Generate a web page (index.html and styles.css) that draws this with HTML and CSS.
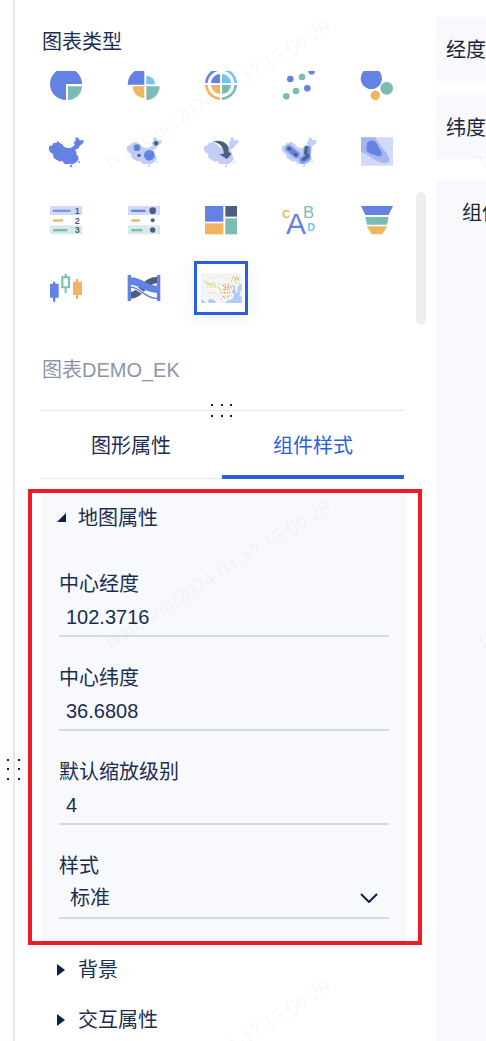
FILE: index.html
```html
<!DOCTYPE html>
<html lang="zh-CN">
<head>
  <meta charset="UTF-8" />
  <meta name="viewport" content="width=device-width, initial-scale=1.0" />
  <title>组件样式</title>
  <link rel="stylesheet" href="styles.css">
</head>
<body>
  <svg class="defs" aria-hidden="true">
    <symbol id="china" viewBox="0 0 96 96" overflow="visible">
      <path d="M-3 31L3 29L8 26L11 20L19 21L24 14L28 20L36 25L43 33L55 37L66 34L75 27L71 22L73 18L78 12L75 6L83 4L89 13L102 13L98 23L89 29L86 36L79 40L74 44L81 47L78 53L84 61L86 70L79 79L69 84L64 86L60 83L52 85L43 83L36 74L29 77L21 72L11 66L9 54L1 49L-3 42Z"/>
      <ellipse cx="63" cy="91" rx="4" ry="3"/>
      <ellipse cx="87" cy="78" rx="2" ry="4"/>
    </symbol>
  </svg>

  <div class="gutter">
    <svg class="gutterGrip" viewBox="0 0 14 22" aria-hidden="true"><path d="M0 0h2v2h-2zM11 0h2v2h-2zM0 9h2v2h-2zM11 9h2v2h-2zM0 19h2v2h-2zM11 19h2v2h-2z"/></svg>
  </div>

  <main class="panel">
    <h2 class="panelTitle">图表类型</h2>
    <div class="chartPicker">
      <div class="chartViewport">
        <div class="chartGrid">
          <button class="chart" aria-label="饼图"><svg viewBox="0 0 96 96"><path class="blue" d="M48 48H96A48 48 0 1 0 48 96Z"/><path class="teal" d="M54 55H96A42 42 0 0 1 54 96Z"/></svg></button>
          <button class="chart" aria-label="玫瑰图"><svg viewBox="0 0 96 96"><path class="blue" d="M-1 50A50 50 0 0 1 49 0V50Z"/><path class="sky" d="M55 49V23A27 26 0 0 1 81 49Z"/><path class="orange" d="M14 55H49V90A35 35 0 0 1 14 55Z"/><path class="teal" d="M55 55H95A40 41 0 0 1 55 96Z"/></svg></button>
          <button class="chart" aria-label="旭日图">
            <svg viewBox="0 0 96 96" fill="none" stroke-width="8">
              <path stroke="#6382e3" d="M4 45A44 44 0 0 1 45 4"/><path stroke="#72c4f0" d="M51 4A44 44 0 0 1 92 45"/>
              <path stroke="#7bbdb5" d="M92 51A44 44 0 0 1 51 92"/><path stroke="#efb55f" d="M45 92A44 44 0 0 1 4 51"/>
              <path class="blue" d="M45 45H18A28 28 0 0 1 45 18Z"/><path class="sky" d="M51 45V18A28 28 0 0 1 78 45Z"/>
              <path class="teal" d="M51 51H78A28 28 0 0 1 51 78Z"/><path class="orange" d="M45 51V78A28 28 0 0 1 18 51Z"/>
            </svg>
          </button>
          <button class="chart" aria-label="散点图"><svg viewBox="0 0 96 96"><g class="blue"><circle cx="22" cy="33" r="10"/><circle cx="86" cy="10" r="10"/><circle cx="73" cy="61" r="10"/></g><g class="teal"><circle cx="57" cy="27" r="10"/><circle cx="10" cy="85" r="10"/><circle cx="39" cy="69" r="10"/></g></svg></button>
          <button class="chart" aria-label="气泡图"><svg viewBox="0 0 96 96"><circle class="blue" cx="31" cy="31" r="32"/><circle class="teal" cx="77" cy="61" r="19"/><circle class="orange" cx="43" cy="82" r="14"/></svg></button>

          <button class="chart" aria-label="地图"><svg viewBox="0 0 96 96"><use href="#china" class="blue"/></svg></button>
          <button class="chart" aria-label="气泡地图"><svg viewBox="0 0 96 96"><use href="#china" class="pale"/><circle class="blue" cx="27" cy="35" r="10"/><circle class="slate" cx="84" cy="22" r="7"/><circle class="slate" cx="33" cy="58" r="5"/><circle class="blue" cx="64" cy="58" r="16"/></svg></button>
          <button class="chart" aria-label="迁徙地图"><svg viewBox="0 0 96 96"><use href="#china" class="pale"/><path class="slate" d="M24 17C48 8 74 20 71 48L80 53L66 69L43 55L56 53C58 36 46 20 24 17Z"/></svg></button>
          <button class="chart" aria-label="热力地图">
            <svg viewBox="0 0 96 96">
              <use href="#china" class="pale"/>
              <g fill="none" stroke-linecap="round">
                <g stroke="#91a8ec" stroke-width="24"><path d="M18 38L40 56"/><path d="M73 40L71 65L60 72"/></g>
                <g stroke="#6382e3" stroke-width="15"><path d="M18 38L40 56"/><path d="M72 38L72 64L60 71"/></g>
                <g stroke="#4d5f80" stroke-width="8"><path d="M16 38h5M36 55l4 2M70 34L67 50L75 60L62 69"/></g>
              </g>
            </svg>
          </button>
          <button class="chart" aria-label="等高线图"><svg viewBox="0 0 96 96"><path fill="#d0d9f7" d="M0 4h96v85H0z"/><path fill="#a4b6ef" d="M0 4H43C50 22 70 40 80 57C90 78 82 83 65 80C40 78 22 53 0 48Z"/><path class="blue" d="M17 30C17 15 30 10 43 18C49 22 51 34 60 45C66 56 58 64 48 60C40 54 19 55 16 40Z"/></svg></button>

          <button class="chart" aria-label="排行榜">
            <svg viewBox="0 0 96 96">
              <path fill="#d0d9f7" d="M0 6h96v27H0z"/><path fill="#d6ebe8" d="M0 64h96v27H0z"/>
              <path fill="#7b96ea" d="M9 17h53v7H9z"/><path class="orange" d="M9 46h30v7H9z"/><path class="teal" d="M9 75h43v7H9z"/>
              <g class="slate rank"><text x="74" y="30">1</text><text x="74" y="59">2</text><text x="74" y="87">3</text></g>
            </svg>
          </button>
          <button class="chart" aria-label="表格"><svg viewBox="0 0 96 96"><path fill="#d0d9f7" d="M0 6h96v27H0z"/><path fill="#d6ebe8" d="M0 64h96v27H0z"/><path class="blue" d="M10 17h42v7H10z"/><path class="orange" d="M10 46h26v7H10z"/><path class="teal" d="M10 75h33v7H10z"/><g class="slate"><circle cx="74" cy="20" r="10"/><circle cx="74" cy="49" r="6"/><circle cx="74" cy="78" r="8"/></g></svg></button>
          <button class="chart" aria-label="矩形树图"><svg viewBox="0 0 96 96"><path class="blue" d="M0 6h55v47H0z"/><path class="orange" d="M0 58h55v33H0z"/><path class="slate" d="M61 6h35v32H61z"/><path class="teal" d="M61 43h35v48H61z"/></svg></button>
          <button class="chart" aria-label="词云"><svg viewBox="0 0 96 96"><text class="orange" x="-2" y="42" font-size="33" font-weight="bold">C</text><text class="blue" x="9" y="91" font-size="90">A</text><text class="teal" x="60" y="43" font-size="50">B</text><text class="sky" x="73" y="81" font-size="32" font-weight="bold">D</text></svg></button>
          <button class="chart" aria-label="漏斗图"><svg viewBox="0 0 96 96"><path class="blue" d="M0 6H96L83 33H13Z"/><path class="teal" d="M13 39H83L78 62H18Z"/><path class="orange" d="M17 67H79L64 91H32Z"/></svg></button>

          <button class="chart" aria-label="K线图"><svg viewBox="0 0 96 96"><path class="blue" d="M0 35h9v-6h7v6h10v42H16v12H9V77H0z"/><path fill="none" stroke="#7bbdb5" stroke-width="6" d="M37 16h20v30H37zM47 5v11M47 46v17"/><path class="orange" d="M69 29h9v-8h6v8h12v40H84v12h-6V69h-9z"/></svg></button>
          <button class="chart" aria-label="桑基图">
            <svg viewBox="0 0 96 96" fill="none">
              <path stroke="#4d5f80" stroke-width="20" d="M8 70C42 68 48 25 88 24"/>
              <path stroke="#fff" stroke-width="9" d="M8 45C42 48 50 80 88 79"/>
              <path stroke="#6382e3" stroke-width="4" d="M8 45C42 48 50 80 88 79"/>
              <path stroke="#6382e3" stroke-width="22" d="M8 27C42 28 48 51 88 52"/>
              <path class="blue" d="M-1 9h10v78H-1zM87 9h10v78H87z"/>
            </svg>
          </button>
          <button class="chart chart--active" aria-label="自定义地图" aria-pressed="true">
            <svg class="thumb" viewBox="0 0 122 90">
              <path fill="#f5f5f3" d="M0 0h122v90H0z"/>
              <path fill="#adcdfb" d="M122 32L112 39L105 51L101 38L92 34L97 48L91 57L99 64L94 77L78 83L72 90H122ZM0 78L8 85L15 90H0ZM26 77L40 82L45 90H24L20 84Z"/>
              <path fill="#f8f5ee" d="M101 41l7 0 2 15-5 3zM118 53l4-5v20l-7 3z"/>
              <path fill="none" stroke="#dfdfe3" d="M0 20L18 24L35 14L56 12L80 18L101 12L122 18M10 50L24 56L48 67L70 64L88 52M45 0L58 10L78 4"/>
              <g fill="none" stroke-width="4">
                <path stroke="#c3dc62" stroke-dasharray="4 6" d="M9 25L28 34L45 28M18 38L34 43L54 42M24 60L45 58M56 53L80 49M94 12L115 10M89 24L118 21M102 29L120 34"/>
                <path stroke="#f5c04a" stroke-dasharray="4 5" d="M53 33L85 34M53 47L92 46M56 65L92 62M92 17L112 14M61 78L87 72M14 30L45 38"/>
                <path stroke="#dd8568" stroke-dasharray="4 4" d="M65 37L91 40M67 50L91 52M60 59L93 58M65 71L91 68M70 43L90 44M102 20L113 17"/>
              </g>
              <path fill="none" stroke="#fff" stroke-width="2" d="M64 30V83M76 28V82M87 35V78M54 55H92M53 65H93"/>
            </svg>
          </button>
        </div>
      </div>
      <div class="scrollThumb"></div>
    </div>

    <input class="chartName" type="text" aria-label="图表名称" value="图表DEMO_EK" />

    <div class="divider">
      <svg class="dividerGrip" viewBox="0 0 22 14" aria-hidden="true"><path d="M0 0h2v2h-2zM10 0h2v2h-2zM19 0h2v2h-2zM0 11h2v2h-2zM10 11h2v2h-2zM19 11h2v2h-2z"/></svg>
    </div>
    <nav class="tabs">
      <button class="tab">图形属性</button>
      <button class="tab tab--active">组件样式</button>
    </nav>

    <div class="highlight">
      <section class="group">
        <button class="groupTitle" aria-expanded="true"><svg class="caret" viewBox="0 0 9 12"><path d="M9 1V10H0Z"/></svg>地图属性</button>
        <div class="field">
          <label for="centerLng">中心经度</label>
          <input type="text" id="centerLng" value="102.3716" />
        </div>
        <div class="field">
          <label for="centerLat">中心纬度</label>
          <input type="text" id="centerLat" value="36.6808" />
        </div>
        <div class="field">
          <label for="zoomLevel">默认缩放级别</label>
          <input type="text" id="zoomLevel" value="4" />
        </div>
        <div class="field">
          <label for="mapStyle">样式</label>
          <div class="selectBox">
            <select id="mapStyle"><option>标准</option></select>
            <svg class="chevron" viewBox="0 0 18 10" aria-hidden="true"><path d="M1 1L9 9L17 1"/></svg>
          </div>
        </div>
      </section>
    </div>

    <div class="closedGroups">
      <button class="groupTitle" aria-expanded="false"><svg class="caret" viewBox="0 0 9 12"><path d="M0 0L8 6L0 12Z"/></svg>背景</button>
      <button class="groupTitle" aria-expanded="false"><svg class="caret" viewBox="0 0 9 12"><path d="M0 0L8 6L0 12Z"/></svg>交互属性</button>
    </div>
  </main>

  <aside class="stage">
    <div class="stageRow">经度</div>
    <div class="stageRow">纬度</div>
    <div class="stageCanvas">组件</div>
  </aside>

  <div class="watermarks" aria-hidden="true">
    <span class="mark mark--1">Ivan.Guo/2024-04-17 15:00:29</span>
    <span class="mark mark--2">Ivan.Guo/2024-04-17 15:00:29</span>
    <span class="mark mark--3">Ivan.Guo/2024-04-17 15:00:29</span>
    <span class="mark mark--4">Ivan.Guo/2024-04-17 15:00:29</span>
    <span class="mark mark--5">Ivan.Guo/2024-04-17 15:00:29</span>
  </div>
</body>
</html>
```
FILE: styles.css
```css
:root {
  --text: #1b2d50;
  --muted: #8d96a7;
  --primary: #2a60dc;
  --soft: #f7f9fd;
  --line: #e4e8ef;
  --ink: #0b2047;
  --alert: #ee1c25;
}

* {
  box-sizing: border-box;
}

body {
  position: relative;
  display: flex;
  height: 100vh;
  margin: 0;
  overflow: hidden;
  background: #fff;
  color: var(--text);
  font-family: "Liberation Sans", "Noto Sans CJK SC", sans-serif;
  font-size: 20px;
  line-height: 30px;
}

button, input, select {
  margin: 0;
  padding: 0;
  border: none;
  background: none;
  color: inherit;
  font: inherit;
}

button {
  cursor: pointer;
}

.defs {
  position: absolute;
  width: 0;
  height: 0;
}

/* resize gutter */
.gutter {
  position: relative;
  flex: none;
  width: 15px;
  border-right: 2px solid var(--line);
}

.gutterGrip {
  position: absolute;
  top: 759px;
  left: 7px;
  width: 14px;
  height: 22px;
  fill: var(--ink);
}

.panel {
  flex: 1;
  min-width: 0;
  padding-top: 27px;
}

.panelTitle {
  margin: 0 0 14px 27px;
  font-size: 20px;
  font-weight: normal;
}

/* chart picker, scrolled to its end */
.chartPicker {
  display: flex;
  align-items: flex-end;
  padding: 0 10px 0 12px;
}

.chartViewport {
  display: flex;
  flex: 1;
  flex-direction: column;
  justify-content: flex-end;
  height: 256px;
  padding-bottom: 5px;
  overflow: hidden;
}

.chartGrid {
  display: grid;
  grid-template-columns: repeat(5, 1fr);
  grid-auto-rows: 68px;
  place-items: center;
}

.chart {
  display: flex;
  align-items: center;
  justify-content: center;
  width: 54px;
  height: 54px;
}

.chart svg {
  width: 32px;
  height: 32px;
  overflow: visible;
}

.chart--active {
  border: 3px solid var(--primary);
  background: #fff;
  box-shadow: 0 4px 20px rgba(27, 45, 80, 0.08);
}

.chart .thumb {
  width: 41px;
  height: 30px;
  overflow: hidden;
}

.blue { fill: #6382e3; }
.teal { fill: #7bbdb5; }
.orange { fill: #efb55f; }
.sky { fill: #72c4f0; }
.slate { fill: #4d5f80; }
.pale { fill: #c1cef6; }

.rank {
  font-size: 27px;
  font-weight: bold;
}

.scrollThumb {
  width: 10px;
  height: 133px;
  margin-bottom: 2px;
  border-radius: 5px;
  background: #edeef2;
}

.chartName {
  display: block;
  width: calc(100% - 59px);
  height: 30px;
  margin: 28px 32px 25px 27px;
  color: var(--muted);
}

.divider {
  position: relative;
  height: 1px;
  margin: 0 32px 0 25px;
  background: var(--line);
}

.dividerGrip {
  position: absolute;
  top: -6px;
  left: calc(50% - 11px);
  width: 22px;
  height: 14px;
  fill: var(--ink);
}

.tabs {
  display: flex;
  height: 68px;
  margin: 0 32px 0 25px;
  box-shadow: inset 0 -1px 0 var(--line);
}

.tab {
  flex: 1;
  padding-top: 2px;
}

.tab--active {
  color: var(--primary);
  box-shadow: inset 0 -4px 0 var(--primary);
}

.highlight {
  margin: 10px 14px 0 13px;
  padding: 0 12px 0 10px;
  border: 4px solid var(--alert);
}

.group {
  padding: 0 17px 22px;
  background: var(--soft);
}

.groupTitle {
  display: flex;
  align-items: center;
  gap: 12px;
  height: 50px;
}

.group .groupTitle {
  margin-left: -2px;
}

.caret {
  width: 9px;
  height: 12px;
  fill: var(--ink);
}

.closedGroups {
  padding-left: 42px;
}

.field {
  padding-top: 26px;
}

.field label {
  display: block;
}

.field input,
.field select {
  display: block;
  width: 100%;
  height: 38px;
  padding: 0 7px;
  border-bottom: 2px solid #d5dae4;
  border-radius: 0;
}

.selectBox {
  position: relative;
}

.field select {
  padding: 0 11px 2px;
  appearance: none;
}

.chevron {
  position: absolute;
  top: 12px;
  right: 11px;
  width: 18px;
  height: 10px;
  fill: none;
  stroke: var(--ink);
  stroke-width: 2;
  pointer-events: none;
}

/* editor area cut off at the window edge */
.stage {
  display: flex;
  flex: none;
  flex-direction: column;
  width: 50px;
  padding-top: 17px;
  overflow: hidden;
  color: #1c2533;
  white-space: nowrap;
}

.stageRow {
  margin-bottom: 14px;
  padding: 18px 10px 16px;
  background: var(--soft);
}

.stageCanvas {
  flex: 1;
  margin-top: 7px;
  padding: 18px 26px;
  background: var(--soft);
}

.watermarks {
  position: absolute;
  inset: 0;
  overflow: hidden;
  pointer-events: none;
}

.mark {
  position: absolute;
  color: rgba(0, 0, 0, 0.05);
  font-family: "Liberation Serif", serif;
  font-size: 21px;
  line-height: 24px;
  white-space: nowrap;
  transform: rotate(-32deg);
  transform-origin: left bottom;
}

.mark--1 { left: 112px; top: 150px; }
.mark--2 { left: 112px; top: 630px; }
.mark--3 { left: 112px; top: 1110px; }
.mark--4 { left: 486px; top: 150px; }
.mark--5 { left: 486px; top: 630px; }
```
